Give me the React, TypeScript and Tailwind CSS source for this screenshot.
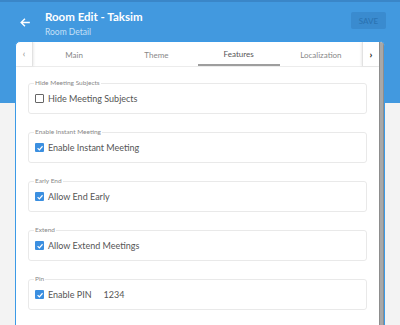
import React from 'react';

const sections = [
  { legend: 'Hide Meeting Subjects', label: 'Hide Meeting Subjects', checked: false },
  { legend: 'Enable Instant Meeting', label: 'Enable Instant Meeting', checked: true },
  { legend: 'Early End', label: 'Allow End Early', checked: true },
  { legend: 'Extend', label: 'Allow Extend Meetings', checked: true },
  { legend: 'Pin', label: 'Enable PIN', checked: true, extra: '1234' },
];

const tabs = ['Main', 'Theme', 'Features', 'Localization'];

// Checkbox square
const Check = ({ checked }: { checked: boolean }) =>
  checked ? (
    <span className="flex h-[9px] w-[9px] items-center justify-center rounded-[1px] bg-[#3b8fe0]">
      <svg viewBox="0 0 10 10" className="h-[8px] w-[8px]">
        <path d="M2 5.2 L4.2 7.3 L8.2 2.8" fill="none" stroke="white" strokeWidth="1.5" />
      </svg>
    </span>
  ) : (
    <span className="h-[9px] w-[9px] rounded-[1px] border border-[#666]" />
  );

export default function App() {
  return (
    <div className="min-h-[325px] bg-[#f3f3f3] font-['Lato',sans-serif]">
      <div className="h-[103px] border-t-2 border-[#3a86c8] bg-[#4299df]">
        <div className="flex items-start pl-[19px] pr-[14px] pt-[7px]">
          <svg viewBox="0 0 24 24" className="mt-[7px] h-[13px] w-[13px]">
            <path d="M20 12H5M11 5l-7 7 7 7" fill="none" stroke="white" strokeWidth="2.6" />
          </svg>
          <div className="ml-[13px] flex-1">
            <div className="text-[11.5px] font-bold leading-[16px] text-white">Room Edit - Taksim</div>
            <div className="mt-[1px] text-[8.5px] leading-[12px] text-[#c5e0f7]">Room Detail</div>
          </div>
          <button className="mt-[3px] h-[17px] w-[35px] rounded-[2px] bg-[#3a8bcf] text-[8px] font-semibold text-[#2b74b3]">
            SAVE
          </button>
        </div>
      </div>

      <div className="mx-[15px] -mt-[62px] h-[300px] overflow-hidden rounded-t-[5px] border border-[#3c9ae6] bg-white">
        <div className="flex h-full">
          <div className="flex-1">
            <div className="flex h-[25px] border-b border-[#ececec]">
              <div className="flex w-[17px] items-center justify-center border-r border-[#e2e2e2] text-[9px] text-[#888] shadow-[1px_0_2px_rgba(0,0,0,0.08)]">
                ‹
              </div>
              {tabs.map((t, i) => (
                <div
                  key={t}
                  className={
                    i === 2
                      ? 'flex flex-1 items-center justify-center border-b-2 border-[#9e9e9e] pt-[2px] text-[8px] text-[#555]'
                      : 'flex flex-1 items-center justify-center pt-[2px] text-[8px] text-[#888]'
                  }
                >
                  {t}
                </div>
              ))}
              <div className="flex w-[17px] items-center justify-center border-l border-[#e2e2e2] text-[10px] font-bold text-[#222] shadow-[-1px_0_2px_rgba(0,0,0,0.08)]">
                ›
              </div>
            </div>

            <div className="flex flex-col gap-[14px] px-[12px] pt-[12px]">
              {sections.map((s) => (
                <fieldset key={s.legend} className="h-[35px] rounded-[3px] border border-[#e9e9e9] px-[5px]">
                  <legend className="px-[1px] text-[6.5px] leading-[8px] text-[#888]">{s.legend}</legend>
                  <div className="mt-[5px] flex items-center gap-[4px] pl-[1px]">
                    <Check checked={s.checked} />
                    <span className="text-[9px] text-[#555]">{s.label}</span>
                    {s.extra && <span className="ml-[8px] text-[9px] text-[#555]">{s.extra}</span>}
                  </div>
                </fieldset>
              ))}
            </div>
          </div>
          <div className="w-[5px] border-x border-[#8d8d8d] bg-[#a8a8a8]" />
        </div>
      </div>
    </div>
  );
}
